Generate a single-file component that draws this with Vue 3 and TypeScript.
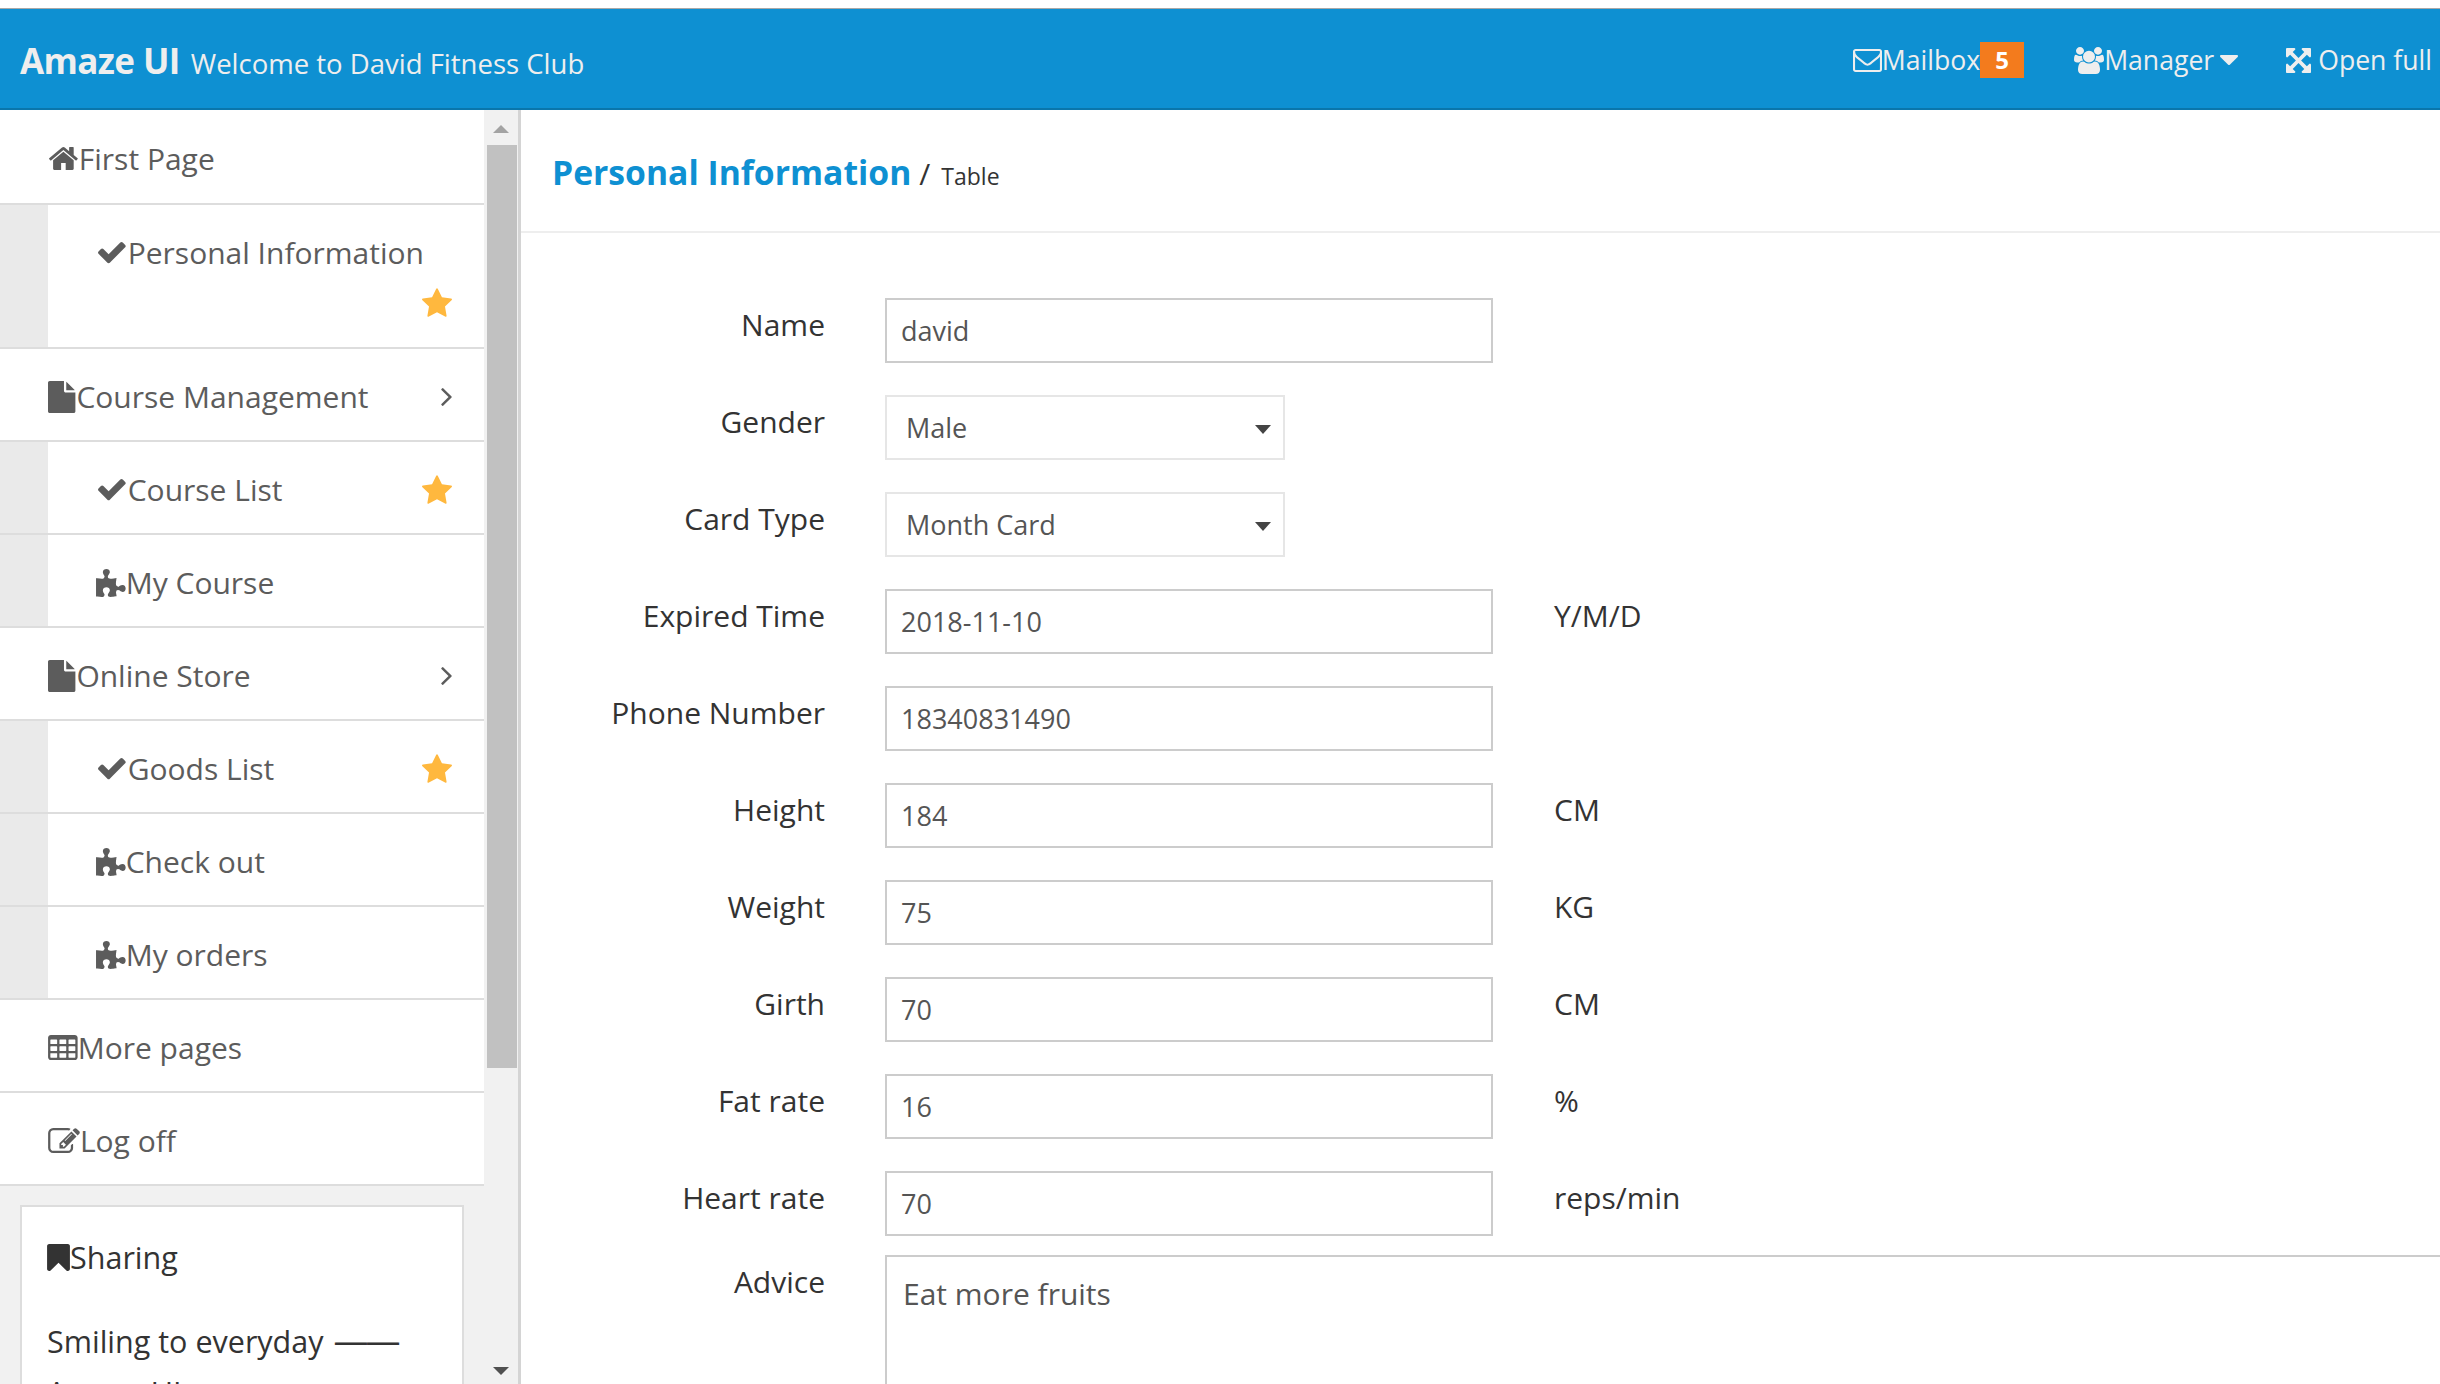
<script setup lang="ts">
type IconName = 'home' | 'check' | 'file' | 'puzzle' | 'star' | 'angle' | 'table' | 'edit' | 'bookmark' | 'envelope' | 'users' | 'caret' | 'arrows'

const paths: Record<IconName, string> = {
  home: 'M1472 992v480q0 26-19 45t-45 19h-384v-384h-256v384h-384q-26 0-45-19t-19-45v-480q0-1 .5-3t.5-3l575-474 575 474q1 2 1 6zm223-69l-62 74q-8 9-21 11h-3q-13 0-21-7l-692-577-692 577q-12 8-24 7-13-2-21-11l-62-74q-8-10-7-23.5t11-21.5l719-599q32-26 76-26t76 26l244 204v-195q0-14 9-23t23-9h192q14 0 23 9t9 23v408l219 182q10 8 11 21.5t-7 23.5z',
  check: 'M1671 566q0 40-28 68l-724 724-136 136q-28 28-68 28t-68-28l-136-136-362-362q-28-28-28-68t28-68l136-136q28-28 68-28t68 28l294 295 656-657q28-28 68-28t68 28l136 136q28 28 28 68z',
  file: 'M1152 512v-472q22 14 36 28l408 408q14 14 28 36h-472zm-128 32q0 40 28 68t68 28h544v1056q0 40-28 68t-68 28h-1344q-40 0-68-28t-28-68v-1600q0-40 28-68t68-28h800v544z',
  puzzle: 'M1664 1098q0 81-44.5 135t-123.5 54q-41 0-77.5-17.5t-59-38-56.5-38-71-17.5q-110 0-110 124 0 39 16 115t15 115v5q-22 0-33 1-34 3-97.5 11.5t-115.5 13.5-98 5q-61 0-103-26.5t-42-83.5q0-37 17.5-71t38-56.5 38-59 17.5-77.5q0-79-54-123.5t-135-44.5q-84 0-143 45.5t-59 127.5q0 43 15 83t33.5 64.5 33.5 53 15 50.5q0 45-46 89-37 35-117 35-95 0-245-24-9-2-27.5-4t-27.5-4l-13-2q-1 0-3-1-2 0-2-1v-1024q2 1 17.5 3.5t34 5 21.5 3.5q150 24 245 24 80 0 117-35 46-44 46-89 0-22-15-50.5t-33.5-53-33.5-64.5-15-83q0-82 59-127.5t144-45.5q80 0 134 44.5t54 123.5q0 41-17.5 77.5t-38 59-38 56.5-17.5 71q0 57 42 83.5t103 26.5q64 0 180-15t163-17v2q-1 2-3.5 17.5t-5 34-3.5 21.5q-24 150-24 245 0 80 35 117 44 46 89 46 22 0 50.5-15t53-33.5 64.5-33.5 83-15q82 0 127.5 59t45.5 143z',
  star: 'M1728 647q0 22-26 48l-363 354 86 500q1 7 1 20 0 21-10.5 35.5t-30.5 14.5q-19 0-40-12l-449-236-449 236q-22 12-40 12-21 0-31.5-14.5t-10.5-35.5q0-6 2-20l86-500-364-354q-25-27-25-48 0-37 56-46l502-73 225-455q19-41 49-41t49 41l225 455 502 73q56 9 56 46z',
  angle: 'M1171 960q0 13-10 23l-466 466q-10 10-23 10t-23-10l-50-50q-10-10-10-23t10-23l393-393-393-393q-10-10-10-23t10-23l50-50q10-10 23-10t23 10l466 466q10 10 10 23z',
  table: 'M576 1376v-192q0-14-9-23t-23-9h-320q-14 0-23 9t-9 23v192q0 14 9 23t23 9h320q14 0 23-9t9-23zm0-384v-192q0-14-9-23t-23-9h-320q-14 0-23 9t-9 23v192q0 14 9 23t23 9h320q14 0 23-9t9-23zm512 384v-192q0-14-9-23t-23-9h-320q-14 0-23 9t-9 23v192q0 14 9 23t23 9h320q14 0 23-9t9-23zm-512-768v-192q0-14-9-23t-23-9h-320q-14 0-23 9t-9 23v192q0 14 9 23t23 9h320q14 0 23-9t9-23zm512 384v-192q0-14-9-23t-23-9h-320q-14 0-23 9t-9 23v192q0 14 9 23t23 9h320q14 0 23-9t9-23zm512 384v-192q0-14-9-23t-23-9h-320q-14 0-23 9t-9 23v192q0 14 9 23t23 9h320q14 0 23-9t9-23zm-512-768v-192q0-14-9-23t-23-9h-320q-14 0-23 9t-9 23v192q0 14 9 23t23 9h320q14 0 23-9t9-23zm512 384v-192q0-14-9-23t-23-9h-320q-14 0-23 9t-9 23v192q0 14 9 23t23 9h320q14 0 23-9t9-23zm0-384v-192q0-14-9-23t-23-9h-320q-14 0-23 9t-9 23v192q0 14 9 23t23 9h320q14 0 23-9t9-23zm128-320v1088q0 66-47 113t-113 47h-1344q-66 0-113-47t-47-113v-1088q0-66 47-113t113-47h1344q66 0 113 47t47 113z',
  edit: 'M888 1184l116-116-152-152-116 116v56h96v96h56zm440-720q-16-16-33 1l-350 350q-17 17-1 33t33-1l350-350q17-17 1-33zm80 594v190q0 119-84.5 203.5t-203.5 84.5h-832q-119 0-203.5-84.5t-84.5-203.5v-832q0-119 84.5-203.5t203.5-84.5h832q63 0 117 25 15 7 18 23 3 17-9 29l-49 49q-14 14-32 8-23-6-45-6h-832q-66 0-113 47t-47 113v832q0 66 47 113t113 47h832q66 0 113-47t47-113v-126q0-13 9-22l64-64q15-15 35-7t20 29zm-96-738l288 288-672 672h-288v-288zm444 132l-92 92-288-288 92-92q28-28 68-28t68 28l152 152q28 28 28 68t-28 68z',
  bookmark: 'M1420 128q23 0 44 9 33 13 52.5 41t19.5 62v1289q0 34-19.5 62t-52.5 41q-19 8-44 8-48 0-83-32l-441-424-441 424q-36 33-83 33-23 0-44-9-33-13-52.5-41t-19.5-62v-1289q0-34 19.5-62t52.5-41q21-9 44-9h1048z',
  envelope: 'M1664 1504v-768q-32 36-69 66-268 206-426 338-51 43-83 67t-86.5 48.5-102.5 24.5h-2q-48 0-102.5-24.5t-86.5-48.5-83-67q-158-132-426-338-37-30-69-66v768q0 13 9.5 22.5t22.5 9.5h1472q13 0 22.5-9.5t9.5-22.5zm0-1051v-24.5l-.5-13-3-12.5-5.5-9-9-7.5-14-2.5h-1472q-13 0-22.5 9.5t-9.5 22.5q0 168 147 284 193 152 401 317 6 5 35 29.5t46 37.5 44.5 31.5 50.5 27.5 43 9h2q20 0 43-9t50.5-27.5 44.5-31.5 46-37.5 35-29.5q208-165 401-317 54-43 100.5-115.5t46.5-131.5zm128-37v1088q0 66-47 113t-113 47h-1472q-66 0-113-47t-47-113v-1088q0-66 47-113t113-47h1472q66 0 113 47t47 113z',
  users: 'M593 896q-162 5-265 128h-134q-82 0-138-40.5t-56-118.5q0-353 124-353 6 0 43.5 21t97.5 42.5 119 21.5q67 0 133-23-5 37-5 66 0 139 81 256zm1071 637q0 120-73 189.5t-194 69.5h-874q-121 0-194-69.5t-73-189.5q0-53 3.5-103.5t14-109 26.5-108.5 43-97.5 62-81 85.5-53.5 111.5-20q10 0 43 21.5t73 48 107 48 135 21.5 135-21.5 107-48 73-48 43-21.5q61 0 111.5 20t85.5 53.5 62 81 43 97.5 26.5 108.5 14 109 3.5 103.5zm-1024-1277q0 106-75 181t-181 75-181-75-75-181 75-181 181-75 181 75 75 181zm704 384q0 159-112.5 271.5t-271.5 112.5-271.5-112.5-112.5-271.5 112.5-271.5 271.5-112.5 271.5 112.5 112.5 271.5zm576 225q0 78-56 118.5t-138 40.5h-134q-103-123-265-128 81-117 81-256 0-29-5-66 66 23 133 23 59 0 119-21.5t97.5-42.5 43.5-21q124 0 124 353zm-128-609q0 106-75 181t-181 75-181-75-75-181 75-181 181-75 181 75 75 181z',
  caret: 'M1408 704q0 26-19 45l-448 448q-19 19-45 19t-45-19l-448-448q-19-19-19-45t19-45 45-19h896q26 0 45 19t19 45z',
  arrows: 'M1283 413l-355 355 355 355 144-144q29-31 70-14 39 17 39 59v448q0 26-19 45t-45 19h-448q-42 0-59-40-17-39 14-69l144-144-355-355-355 355 144 144q31 30 14 69-17 40-59 40h-448q-26 0-45-19t-19-45v-448q0-42 40-59 39-17 69 14l144 144 355-355-355-355-144 144q-19 19-45 19-12 0-24-5-40-17-40-59v-448q0-26 19-45t45-19h448q42 0 59 40 17 39-14 69l-144 144 355 355 355-355-144-144q-31-30-14-69 17-40 59-40h448q26 0 45 19t19 45v448q0 42-39 59-13 5-25 5-26 0-45-19z',
}

const boxes: Record<string, string> = {
  home: '90 253 1612 1283',
  check: '121 334 1550 1188',
  file: '128 0 1536 1792',
  puzzle: '0 0 1664 1572',
  table: '64 128 1664 1408',
  edit: '0 128 1784 1408',
}

interface Row { label: string; value: string; kind: 'input' | 'select'; unit?: string }
const rows: Row[] = [
  { label: 'Name', value: 'david', kind: 'input' },
  { label: 'Gender', value: 'Male', kind: 'select' },
  { label: 'Card Type', value: 'Month Card', kind: 'select' },
  { label: 'Expired Time', value: '2018-11-10', kind: 'input', unit: 'Y/M/D' },
  { label: 'Phone Number', value: '18340831490', kind: 'input' },
  { label: 'Height', value: '184', kind: 'input', unit: 'CM' },
  { label: 'Weight', value: '75', kind: 'input', unit: 'KG' },
  { label: 'Girth', value: '70', kind: 'input', unit: 'CM' },
  { label: 'Fat rate', value: '16', kind: 'input', unit: '%' },
  { label: 'Heart rate', value: '70', kind: 'input', unit: 'reps/min' },
]

interface Nav { label: string; icon: IconName; sub?: boolean; star?: boolean; wrap?: boolean; arrow?: boolean }
const nav: Nav[] = [
  { label: 'First Page', icon: 'home' },
  { label: 'Personal Information', icon: 'check', sub: true, star: true, wrap: true },
  { label: 'Course Management', icon: 'file', arrow: true },
  { label: 'Course List', icon: 'check', sub: true, star: true },
  { label: 'My Course', icon: 'puzzle', sub: true },
  { label: 'Online Store', icon: 'file', arrow: true },
  { label: 'Goods List', icon: 'check', sub: true, star: true },
  { label: 'Check out', icon: 'puzzle', sub: true },
  { label: 'My orders', icon: 'puzzle', sub: true },
  { label: 'More pages', icon: 'table' },
  { label: 'Log off', icon: 'edit' },
]
</script>

<template>
  <div class="app">
    <header class="top">
      <div class="brand"><strong>Amaze UI</strong><small>Welcome to David Fitness Club</small></div>
      <nav class="tools">
        <a class="tool t-mail"><svg class="i-mail" viewBox="0 256 1792 1408" preserveAspectRatio="none"><path :d="paths.envelope" /></svg>Mailbox<span class="badge">5</span></a>
        <a class="tool t-mgr"><svg class="i-users" viewBox="0 0 1920 1792" preserveAspectRatio="none"><path :d="paths.users" /></svg>Manager<svg class="i-caret" viewBox="384 640 1024 576" preserveAspectRatio="none"><path :d="paths.caret" /></svg></a>
        <a class="tool t-full"><svg class="i-arrows" viewBox="0 0 1536 1536" preserveAspectRatio="none"><path :d="paths.arrows" /></svg>Open full</a>
      </nav>
    </header>
    <div class="body">
      <aside class="side">
        <div class="side-scroll">
          <ul class="menu">
            <li v-for="n in nav" :key="n.label" class="item" :class="{ sub: n.sub }">
              <div class="link" :class="{ wrap: n.wrap }">
                <span class="lab"><svg :class="'i-' + n.icon" :viewBox="boxes[n.icon]"><path :d="paths[n.icon]" /></svg>{{ n.label }}</span>
                <svg v-if="n.star" class="i-star" viewBox="64 32 1664 1587"><path :d="paths.star" /></svg>
                <svg v-if="n.arrow" class="i-angle" viewBox="589 461 582 998"><path :d="paths.angle" /></svg>
              </div>
            </li>
          </ul>
          <section class="panel">
            <p class="share"><svg class="i-book" viewBox="256 128 1280 1513"><path :d="paths.bookmark" /></svg>Sharing</p>
            <p class="quote">Smiling to everyday <span class="dash">——</span><br />Amaze UI</p>
          </section>
        </div>
        <div class="bar">
          <span class="arrow up"></span>
          <span class="thumb"></span>
          <span class="arrow down"></span>
        </div>
      </aside>
      <main class="main">
        <div class="head"><strong>Personal Information</strong><span class="sl">/</span><small>Table</small></div>
        <form class="form">
          <div v-for="r in rows" :key="r.label" class="row">
            <label class="lb">{{ r.label }}</label>
            <input v-if="r.kind === 'input'" class="field" :value="r.value" readonly />
            <div v-else class="sel">
              <select class="select"><option>{{ r.value }}</option></select>
              <span class="tri"></span>
            </div>
            <span v-if="r.unit" class="unit">{{ r.unit }}</span>
          </div>
          <div class="row last">
            <label class="lb">Advice</label>
            <textarea class="area" readonly>Eat more fruits</textarea>
          </div>
        </form>
      </main>
    </div>
  </div>
</template>

<style>
html, body { margin: 0; background: #fff; overflow: hidden; }
</style>

<style scoped>
.app { height: 1384px; overflow: hidden; padding-top: 8px; box-sizing: border-box; display: flex; flex-direction: column; font-family: "Open Sans", "Noto Sans", sans-serif; color: #333; }
svg { fill: currentColor; display: block; flex: none; overflow: visible; }
.top { height: 102px; box-sizing: border-box; flex: none; background: #0e90d2; border-top: 1px solid #a8a8a8; border-bottom: 2px solid #0a76ab; display: flex; align-items: center; justify-content: space-between; color: #eee; padding: 3px 8px 0 20px; }
.brand { display: flex; align-items: baseline; }
.brand strong { font-size: 35px; font-weight: 700; letter-spacing: -0.6px; color: #eee; }
.brand small { font-size: 27.5px; margin-left: 11px; }
.tools { display: flex; align-items: center; font-size: 26.6px; }
.tool { display: flex; align-items: center; }
.t-mail { margin-right: 50px; }
.t-mgr { margin-right: 48px; }
.i-mail { width: 29px; height: 23px; }
.i-users { width: 30px; height: 27px; }
.i-caret { width: 18px; height: 10px; margin-left: 6px; }
.i-arrows { width: 25px; height: 25px; margin-right: 7px; }
.badge { background: #f37b1d; color: #fff; font-weight: 700; font-size: 24px; width: 44px; height: 36px; line-height: 36px; text-align: center; }
.body { flex: 1; min-height: 0; display: flex; }
.side { width: 521px; flex: none; display: flex; box-sizing: border-box; border-right: 3px solid #d4d4d4; background: #f1f1f1; overflow: hidden; }
.side-scroll { width: 484px; flex: none; }
.menu { list-style: none; margin: 0; padding: 0; }
.item { background: #fff; border-bottom: 2px solid #ddd; font-size: 30px; color: #5c5c5c; line-height: 51px; }
.sub { background: #eaeaea; padding-left: 48px; }
.link { background: #fff; display: flex; align-items: center; justify-content: space-between; padding: 22px 32px 18px 48px; box-sizing: border-box; }
.item:first-child .link { padding-top: 23px; padding-bottom: 19px; }
.wrap { flex-wrap: wrap; }
.wrap .lab { flex-basis: 100%; }
.wrap .i-star { margin: 10px 0 12px auto; }
.lab { display: flex; align-items: center; }
.i-star { width: 30px; height: 29px; color: #ffb83e; }
.i-angle { width: 11px; height: 18px; }
.i-home { width: 28.800px; height: 23px; margin: 0 1px; }
.i-check { width: 27.700px; height: 21.200px; margin: 0 2px; }
.i-file { width: 27.400px; height: 32px; margin-right: 1px; }
.i-puzzle { width: 29.700px; height: 28px; }
.i-table { width: 29.700px; height: 25px; }
.i-edit { width: 31.900px; height: 25px; }
.panel { margin: 19px 20px 0; background: #fff; border: 2px solid #ddd; padding: 25px 25px; font-size: 30.500px; color: #333; line-height: 51.2px; }
.panel p { margin: 0; }
.panel .share { display: flex; align-items: center; margin-bottom: 31px; }
.dash { margin-left: 2px; font-size: 35px; letter-spacing: -3px; }
.i-book { width: 23px; height: 27px; }
.bar { width: 34px; flex: none; display: flex; flex-direction: column; align-items: center; height: 1274px; }
.arrow { width: 0; height: 0; border-left: 8px solid transparent; border-right: 8px solid transparent; }
.up { border-bottom: 8px solid #a3a3a3; margin-top: 15px; margin-bottom: 12px; }
.thumb { width: 30px; height: 923px; background: #c1c1c1; margin-left: 1px; }
.down { border-top: 8px solid #505050; margin-top: auto; margin-bottom: 9px; }
.main { flex: 1; min-width: 0; overflow: hidden; background: #fff; }
.head { height: 123px; box-sizing: border-box; border-bottom: 2px solid #eee; display: flex; align-items: baseline; padding: 39px 0 0 31px; }
.head strong { font-size: 33.700px; color: #0e90d2; font-weight: 700; }
.sl { font-size: 30px; margin-left: 8px; }
.head small { font-size: 23px; margin-left: 11px; }
.form { padding-top: 65px; }
.row { display: flex; margin-bottom: 32px; align-items: flex-start; }
.last { margin-top: -13px; }
.lb { width: 304px; flex: none; text-align: right; font-size: 30px; line-height: 51.2px; margin-right: 60px; padding-top: 1px; color: #333; }
.field { width: 608px; height: 65px; flex: none; box-sizing: border-box; border: 2px solid #ccc; background: #fff; padding: 0 14px 1px; margin: 0; font: inherit; font-size: 27px; color: #555; outline: none; }
.sel { position: relative; width: 400px; height: 65px; flex: none; }
.select { appearance: none; width: 100%; height: 100%; box-sizing: border-box; border: 2px solid #e6e6e6; background: #fff; font: inherit; font-size: 27px; color: #555; padding: 0 19px; margin: 0; outline: none; }
.tri { position: absolute; right: 14px; top: 30px; width: 0; height: 0; border-left: 8.500px solid transparent; border-right: 8.500px solid transparent; border-top: 9px solid #444; }
.unit { font-size: 30px; line-height: 51.2px; margin-left: 61px; padding-top: 1px; color: #333; }
.area { width: 1700px; height: 300px; flex: none; box-sizing: border-box; border: 2px solid #ccc; font: inherit; font-size: 30px; color: #555; padding: 16px 16px; margin: 0; outline: none; resize: none; }
</style>
